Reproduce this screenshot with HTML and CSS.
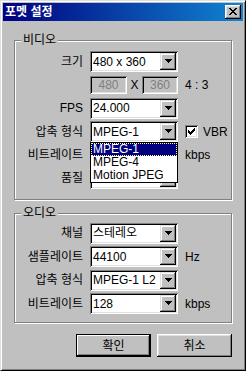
FILE: index.html
```html
<!DOCTYPE html>
<html lang="ko">
<head>
    <meta charset="UTF-8">
    <meta name="viewport" content="width=device-width, initial-scale=1.0">
    <title>포멧 설정</title>
    <link rel="stylesheet" href="styles.css">
</head>
<body>
    <div class="window">
        <div class="titlebar">
            <span class="title">포멧 설정</span>
            <button class="close">
                <svg width="8" height="7" viewBox="0 0 8 7" shape-rendering="crispEdges"><path d="M0 0h2v1H0zM6 0h2v1H6zM1 1h2v1H1zM5 1h2v1H5zM2 2h4v1H2zM3 3h2v1H3zM2 4h4v1H2zM1 5h2v1H1zM5 5h2v1H5zM0 6h2v1H0zM6 6h2v1H6z" fill="#000"/></svg>
            </button>
        </div>

        <div class="client">
            <div class="group">
                <span class="group-title">비디오</span>
                <div class="form-grid video-grid">
                    <label>크기</label>
                    <div class="combo"><span class="combo-text">480 x 360</span><span class="arrow"><svg width="7" height="4" viewBox="0 0 7 4" shape-rendering="crispEdges"><path d="M0 0h7v1H0zM1 1h5v1H1zM2 2h3v1H2zM3 3h1v1H3z"/></svg></span></div>
                    <span class="extra"></span>

                    <span></span>
                    <div class="size-fields">
                        <div class="edit edit-w">480</div>
                        <span class="times">X</span>
                        <div class="edit edit-h">360</div>
                    </div>
                    <span class="extra">4 : 3</span>

                    <label>FPS</label>
                    <div class="combo"><span class="combo-text">24.000</span><span class="arrow"><svg width="7" height="4" viewBox="0 0 7 4" shape-rendering="crispEdges"><path d="M0 0h7v1H0zM1 1h5v1H1zM2 2h3v1H2zM3 3h1v1H3z"/></svg></span></div>
                    <span class="extra"></span>

                    <label>압축 형식</label>
                    <div class="combo">
                        <span class="combo-text">MPEG-1</span><span class="arrow"><svg width="7" height="4" viewBox="0 0 7 4" shape-rendering="crispEdges"><path d="M0 0h7v1H0zM1 1h5v1H1zM2 2h3v1H2zM3 3h1v1H3z"/></svg></span>
                        <ul class="droplist">
                            <li class="selected">MPEG-1</li>
                            <li>MPEG-4</li>
                            <li>Motion JPEG</li>
                        </ul>
                    </div>
                    <span class="extra">
                        <span class="check"><svg width="7" height="7" viewBox="0 0 7 7" shape-rendering="crispEdges"><path d="M6 0h1v1H6zM5 1h2v1H5zM0 2h1v1H0zM4 2h3v1H4zM0 3h2v1H0zM3 3h3v1H3zM0 4h5v1H0zM1 5h3v1H1zM2 6h1v1H2z"/></svg></span>
                        VBR
                    </span>

                    <label>비트레이트</label>
                    <div class="combo"><span class="combo-text"></span><span class="arrow"></span></div>
                    <span class="extra">kbps</span>

                    <label>품질</label>
                    <div class="combo"><span class="combo-text"></span><span class="arrow"></span></div>
                    <span class="extra"></span>
                </div>
            </div>

            <div class="group group-audio">
                <span class="group-title">오디오</span>
                <div class="form-grid">
                    <label>채널</label>
                    <div class="combo"><span class="combo-text">스테레오</span><span class="arrow"><svg width="7" height="4" viewBox="0 0 7 4" shape-rendering="crispEdges"><path d="M0 0h7v1H0zM1 1h5v1H1zM2 2h3v1H2zM3 3h1v1H3z"/></svg></span></div>
                    <span class="extra"></span>

                    <label>샘플레이트</label>
                    <div class="combo"><span class="combo-text">44100</span><span class="arrow"><svg width="7" height="4" viewBox="0 0 7 4" shape-rendering="crispEdges"><path d="M0 0h7v1H0zM1 1h5v1H1zM2 2h3v1H2zM3 3h1v1H3z"/></svg></span></div>
                    <span class="extra">Hz</span>

                    <label>압축 형식</label>
                    <div class="combo"><span class="combo-text">MPEG-1 L2</span><span class="arrow"><svg width="7" height="4" viewBox="0 0 7 4" shape-rendering="crispEdges"><path d="M0 0h7v1H0zM1 1h5v1H1zM2 2h3v1H2zM3 3h1v1H3z"/></svg></span></div>
                    <span class="extra"></span>

                    <label>비트레이트</label>
                    <div class="combo"><span class="combo-text">128</span><span class="arrow"><svg width="7" height="4" viewBox="0 0 7 4" shape-rendering="crispEdges"><path d="M0 0h7v1H0zM1 1h5v1H1zM2 2h3v1H2zM3 3h1v1H3z"/></svg></span></div>
                    <span class="extra">kbps</span>
                </div>
            </div>

            <div class="buttons">
                <button class="btn btn-default">확인</button>
                <button class="btn">취소</button>
            </div>
        </div>
    </div>
</body>
</html>
```

FILE: styles.css
```css
:root {
    --face: #c0c0c0;
    --light: #dfdfdf;
    --shadow: #808080;
    --title-start: #000080;
    --title-end: #1084d0;
}

* {
    margin: 0;
    padding: 0;
    box-sizing: border-box;
    font-family: "Liberation Sans", "Noto Sans CJK KR", sans-serif;
    font-size: 12px;
    line-height: 14px;
}

body {
    background: var(--face);
    color: #000;
}

.window {
    width: 246px;
    height: 371px;
    background: var(--face);
    border: 1px solid;
    border-color: var(--light) #000 #000 var(--light);
    box-shadow: inset 1px 1px 0 #fff, inset -1px -1px 0 var(--shadow);
    padding: 2px;
}

.titlebar {
    height: 18px;
    display: flex;
    align-items: center;
    justify-content: space-between;
    padding: 0 2px;
    background: linear-gradient(to right, var(--title-start), var(--title-end));
}

.title {
    color: #fff;
    font-weight: bold;
}

.close {
    width: 16px;
    height: 14px;
    border: none;
    background: var(--face);
    box-shadow: inset -1px -1px 0 #000, inset 1px 1px 0 #fff, inset -2px -2px 0 var(--shadow), inset 2px 2px 0 var(--light);
    display: flex;
    align-items: center;
    justify-content: center;
    padding: 0 1px 1px 0;
}

.close svg {
    display: block;
}

.client {
    padding: 19px 11px 0 11px;
}

.group {
    position: relative;
    border: 1px solid var(--shadow);
    box-shadow: inset 1px 1px 0 #fff, 1px 1px 0 #fff;
    padding: 10px 0 10px 0;
}

.group-audio {
    margin-top: 13px;
    padding: 9px 0 8px 0;
}

.group-title {
    position: absolute;
    top: -8px;
    left: 6px;
    padding: 0 2px;
    background: var(--face);
}

.form-grid {
    display: grid;
    grid-template-columns: 70px 88px auto;
    grid-auto-rows: 21px;
    column-gap: 5px;
    row-gap: 2.4px;
}

.form-grid label {
    display: flex;
    align-items: center;
    justify-content: flex-end;
    padding-right: 2px;
}

.combo {
    position: relative;
    height: 21px;
    display: flex;
    align-items: center;
    padding: 2px;
    background: #fff;
    box-shadow: inset 1px 1px 0 var(--shadow), inset -1px -1px 0 #fff, inset 2px 2px 0 #000, inset -2px -2px 0 var(--light);
}

.combo-text {
    flex: 1;
    padding-left: 1px;
    white-space: nowrap;
    overflow: hidden;
}

.arrow {
    width: 16px;
    height: 17px;
    background: var(--face);
    box-shadow: inset -1px -1px 0 #000, inset 1px 1px 0 var(--light), inset -2px -2px 0 var(--shadow), inset 2px 2px 0 #fff;
    display: flex;
    align-items: center;
    justify-content: center;
    padding-bottom: 1px;
}

.arrow svg {
    display: block;
}

.droplist {
    position: absolute;
    top: 100%;
    left: 0;
    width: 88px;
    list-style: none;
    background: #fff;
    border: 1px solid #000;
    z-index: 2;
}

.droplist li {
    height: 13px;
    line-height: 13px;
    padding-left: 2px;
    white-space: nowrap;
}

.droplist .selected {
    background: var(--title-start);
    color: #fff;
    outline: 1px dotted #ffff80;
    outline-offset: -1px;
}

.size-fields {
    display: flex;
    align-items: center;
}

.edit {
    height: 18px;
    display: flex;
    align-items: center;
    justify-content: center;
    color: var(--shadow);
    background: var(--face);
    box-shadow: inset 1px 1px 0 var(--shadow), inset -1px -1px 0 #fff, inset 2px 2px 0 #000, inset -2px -2px 0 var(--light);
}

.edit-w {
    width: 37px;
}

.edit-h {
    width: 36px;
}

.times {
    width: 15px;
    text-align: center;
}

.extra {
    display: flex;
    align-items: center;
    gap: 5px;
    padding-left: 2px;
}

.check {
    width: 13px;
    height: 13px;
    background: #fff;
    box-shadow: inset 1px 1px 0 var(--shadow), inset -1px -1px 0 #fff, inset 2px 2px 0 #000, inset -2px -2px 0 var(--light);
    display: flex;
    align-items: center;
    justify-content: center;
}

.check svg {
    display: block;
}

.buttons {
    display: flex;
    justify-content: flex-end;
    gap: 6px;
    margin-top: 11px;
}

.btn {
    width: 75px;
    height: 23px;
    border: none;
    background: var(--face);
    box-shadow: inset -1px -1px 0 #000, inset 1px 1px 0 #fff, inset -2px -2px 0 var(--shadow), inset 2px 2px 0 var(--light);
}

.btn-default {
    border: 1px solid #000;
    box-shadow: inset -1px -1px 0 #000, inset 1px 1px 0 #fff, inset -2px -2px 0 var(--shadow);
}
```
